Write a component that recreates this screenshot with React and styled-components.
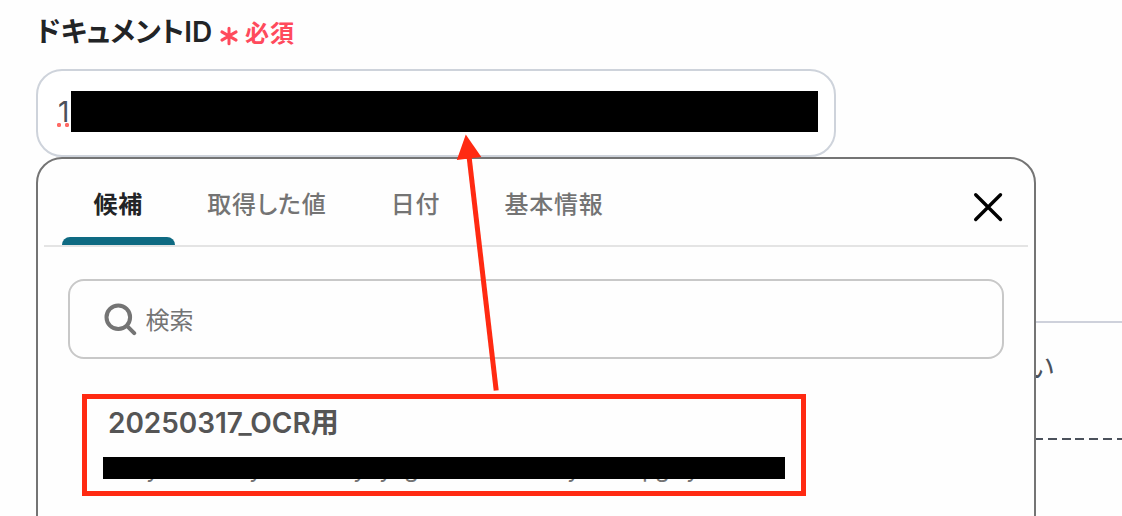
import React from 'react';
import styled, { createGlobalStyle } from 'styled-components';

const tabs = [
  { name: '候補', active: true },
  { name: '取得した値' },
  { name: '日付' },
  { name: '基本情報' },
];

// x offset of every letter that reaches below the masked line
const maskedLetters = [
  ['y', 43],
  ['y', 146],
  ['y', 250],
  ['y', 276],
  ['g', 301],
  ['y', 464],
  ['p', 539],
  ['g', 552],
  ['y', 583],
];

function DocumentIdField() {
  return (
    <Field>
      <Label>
        <LabelText>ドキュメントID</LabelText>
        <RequiredIcon viewBox="0 0 20 20">
          <path d="M10 2.2v15.6M2.9 5.9l14.2 8.2M2.9 14.1l14.2-8.2" />
        </RequiredIcon>
        <Required>必須</Required>
      </Label>
      <InputBox>
        <Value>1</Value>
        <Mask $width={747} $height={41} />
      </InputBox>
    </Field>
  );
}

function SuggestPanel() {
  return (
    <Panel>
      <TabBar>
        {tabs.map((tab) => (
          <Tab key={tab.name} $active={tab.active}>
            {tab.name}
          </Tab>
        ))}
        <CloseButton aria-label="close">
          <svg width="32" height="32" viewBox="0 0 32 32">
            <path d="M3.7 3.7l24.8 24.8M28.5 3.7L3.7 28.5" />
          </svg>
        </CloseButton>
      </TabBar>
      <SearchBox>
        <SearchIcon viewBox="0 0 34 34">
          <circle cx="15.3" cy="15.3" r="11.8" />
          <path d="M24.2 24.2l7 7" />
        </SearchIcon>
        <Placeholder>検索</Placeholder>
      </SearchBox>
      <Candidate>
        <CandidateName>20250317_OCR用</CandidateName>
        <MaskedLine>
          {maskedLetters.map(([letter, x]) => (
            <Letter key={x} style={{ left: x }}>
              {letter}
            </Letter>
          ))}
          <Mask $width={682} $height={22} />
        </MaskedLine>
      </Candidate>
    </Panel>
  );
}

function App() {
  return (
    <>
      <GlobalStyle />
      <Page>
        <DocumentIdField />
        <NextSection>
          <NextText>い</NextText>
          <DashedLine />
        </NextSection>
        <SuggestPanel />
        <Arrow viewBox="0 0 50 260">
          <path d="M19 22L46.2 256.5" stroke="#ff2a12" strokeWidth="5" />
          <path d="M15.8 0.5L31.3 23L6.8 26z" fill="#ff2a12" />
        </Arrow>
      </Page>
    </>
  );
}

export default App;

const GlobalStyle = createGlobalStyle`
  body {
    margin: 0;
    background: #fefefe;
    font-family: Inter, "Noto Sans CJK JP", sans-serif;
  }
`;

const Page = styled.div`
  position: relative;
  width: 1122px;
  height: 516px;
  overflow: hidden;
`;

const Field = styled.div`
  display: flex;
  flex-direction: column;
  padding-left: 36px;
`;

const Label = styled.div`
  display: flex;
  align-items: center;
  height: 69px;
  box-sizing: border-box;
  padding-bottom: 5px;
`;

const LabelText = styled.span`
  width: 177px;
  font-size: 28px;
  font-weight: 600;
  line-height: 40px;
  white-space: nowrap;
  color: #222426;
  font-feature-settings: 'palt';
`;

const RequiredIcon = styled.svg`
  width: 20px;
  height: 20px;
  margin: 8px 6px 0;
  fill: none;
  stroke: #ff4a5c;
  stroke-width: 3;
  stroke-linecap: round;
`;

const Required = styled.span`
  margin-top: 3px;
  font-size: 24px;
  font-weight: 600;
  line-height: 36px;
  letter-spacing: 1px;
  color: #ff4a5c;
`;

const InputBox = styled.div`
  display: flex;
  align-items: flex-start;
  width: 800px;
  height: 88px;
  box-sizing: border-box;
  padding: 20px 16px 0 19px;
  border: 2px solid #ced3db;
  border-radius: 26px;
  background: #fff;
`;

const Value = styled.span`
  width: 14px;
  height: 36px;
  box-sizing: border-box;
  padding-left: 1px;
  font-size: 28px;
  line-height: 42px;
  color: #4b515b;
  background: radial-gradient(circle at 2px 2px, #ff6b66 1.9px, transparent 2.4px)
    0 32px / 8px 4px repeat-x;
`;

const Mask = styled.div`
  position: relative;
  width: ${(props) => props.$width}px;
  height: ${(props) => props.$height}px;
  background: #000;
`;

// content behind the panel, only its right edge is visible
const NextSection = styled.div`
  width: 86px;
  margin: 164px 0 0 auto;
  border-top: 2px solid #ced1db;
`;

const NextText = styled.div`
  height: 115px;
  margin-left: -9px;
  padding-top: 25px;
  box-sizing: border-box;
  font-size: 28px;
  line-height: 40px;
  color: #4b515b;
`;

const DashedLine = styled.div`
  height: 2px;
  background: repeating-linear-gradient(
    90deg,
    #4b515b 0 9px,
    transparent 9px 13.75px
  ) -2px 0;
`;

const Panel = styled.div`
  position: absolute;
  top: 157px;
  left: 36px;
  width: 1000px;
  height: 400px;
  box-sizing: border-box;
  border: 2px solid #747474;
  border-radius: 26px;
  background: #fefefe;
`;

const TabBar = styled.div`
  display: flex;
  height: 88px;
  box-sizing: border-box;
  margin: 0 6px;
  padding-left: 18px;
  border-bottom: 2px solid #e4e4e4;
`;

const Tab = styled.div`
  position: relative;
  padding: 0 32px 0 31.5px;
  margin-right: 0.7px;
  font-size: 24px;
  font-weight: ${(props) => (props.$active ? 600 : 500)};
  line-height: 92px;
  letter-spacing: 0.8px;
  font-feature-settings: 'palt';
  white-space: nowrap;
  color: ${(props) => (props.$active ? '#222426' : '#747474')};

  &::after {
    content: '';
    position: absolute;
    left: 0;
    right: 0;
    bottom: 0;
    height: 8px;
    border-radius: 8px 8px 0 0;
    background: ${(props) => (props.$active ? '#0e6a82' : 'transparent')};
  }
`;

const CloseButton = styled.button`
  width: 32px;
  height: 32px;
  margin: 32px 24px 0 auto;
  padding: 0;
  border: none;
  background: none;

  path {
    fill: none;
    stroke: #000;
    stroke-width: 3.4;
    stroke-linecap: round;
  }
`;

const SearchBox = styled.div`
  display: flex;
  align-items: center;
  width: 936px;
  height: 80px;
  box-sizing: border-box;
  margin: 32px 0 0 30px;
  padding-left: 33px;
  border: 2px solid #c8c8c8;
  border-radius: 16px;
`;

const SearchIcon = styled.svg`
  width: 34px;
  height: 34px;
  margin-right: 8.5px;
  fill: none;
  stroke: #747474;
  stroke-width: 4;
  stroke-linecap: round;
`;

const Placeholder = styled.span`
  padding-top: 3px;
  font-size: 24px;
  line-height: 36px;
  color: #747474;
`;

const Candidate = styled.div`
  width: 724px;
  height: 102px;
  box-sizing: border-box;
  margin: 35px 0 0 44px;
  padding: 3px 16px 0;
  border: 5px solid #ff2a12;
`;

const CandidateName = styled.div`
  height: 55px;
  padding-left: 5px;
  font-size: 28px;
  font-weight: 600;
  line-height: 42px;
  letter-spacing: -0.05px;
  color: #555;
`;

const MaskedLine = styled.div`
  position: relative;
`;

const Letter = styled.span`
  position: absolute;
  top: -3px;
  font-size: 24px;
  line-height: 30px;
  color: #747474;
`;

const Arrow = styled.svg`
  position: absolute;
  top: 134px;
  left: 450px;
  width: 50px;
  height: 260px;
`;
